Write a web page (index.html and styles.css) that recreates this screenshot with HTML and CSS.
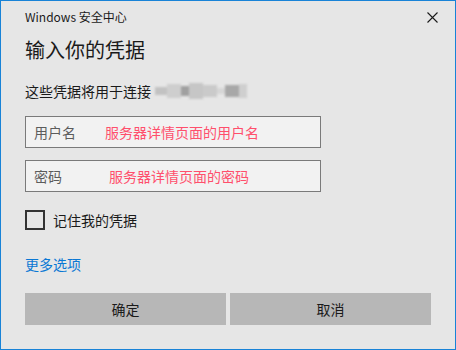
FILE: index.html
```html
<!DOCTYPE html>
<html lang="zh-CN">
<head>
<meta charset="utf-8">
<title>Windows 安全中心</title>
<link rel="stylesheet" href="styles.css">
</head>
<body>
<div class="window">
  <div class="titlebar">
    <span class="title">Windows 安全中心</span>
    <svg class="close" width="11" height="11" viewBox="0 0 11 11"><path d="M0.5 0.5 L10.5 10.5 M10.5 0.5 L0.5 10.5" stroke="#1a1a1a" stroke-width="1.1" fill="none"/></svg>
  </div>
  <div class="heading">输入你的凭据</div>
  <div class="desc">这些凭据将用于连接 <span class="blob"><i class="b1"></i><i class="b2"></i><i class="b3"></i><i class="b4"></i><i class="b5"></i><i class="b6"></i><i class="b7"></i><i class="b8"></i></span></div>
  <div class="field">
    <span class="ph">用户名</span><span class="note note-user">服务器详情页面的用户名</span>
  </div>
  <div class="field field-pass">
    <span class="ph">密码</span><span class="note note-pass">服务器详情页面的密码</span>
  </div>
  <label class="remember"><span class="box"></span><span>记住我的凭据</span></label>
  <div class="more">更多选项</div>
  <div class="buttons">
    <div class="btn">确定</div>
    <div class="btn">取消</div>
  </div>
</div>
</body>
</html>
```
FILE: styles.css
```css
* { box-sizing: border-box; }
html, body { margin: 0; padding: 0; }
body {
  font-family: "Noto Sans CJK SC", "Noto Sans", sans-serif;
  color: #000;
  background: #e6e6e6;
}
.window {
  width: 456px;
  height: 350px;
  border: 1px solid #1883d7;
  background: #e6e6e6;
  padding: 0 24px;
  display: flex;
  flex-direction: column;
}
.titlebar {
  height: 35px;
  display: flex;
  justify-content: space-between;
  align-items: flex-start;
  padding-top: 8px;
  margin-right: -24px;
  padding-right: 17px;
}
.title {
  font-size: 12px;
  line-height: 16px;
  color: #1a1a1a;
}
.close { margin-top: 3px; }
.heading {
  font-size: 20px;
  line-height: 28px;
  height: 28px;
  color: #1a1a1a;
}
.desc {
  margin-top: 17px;
  font-size: 14px;
  line-height: 20px;
  height: 20px;
  color: #1a1a1a;
  display: flex;
  align-items: center;
}
.blob {
  display: inline-flex;
  align-items: center;
  margin-left: 4px;
  height: 20px;
  filter: blur(1px);
}
.blob i { display: block; height: 8px; background: #c4c4c4; }
.blob .b1 { width: 12px; background: #c2c2c2; }
.blob .b2 { width: 14px; background: #cecece; height: 14px; }
.blob .b3 { width: 8px; background: #a0a0a0; height: 10px; }
.blob .b4 { width: 14px; background: #c6c6c6; height: 16px; }
.blob .b5 { width: 14px; background: #cacaca; height: 12px; }
.blob .b6 { width: 8px; background: #d6d6d6; height: 6px; }
.blob .b7 { width: 14px; background: #a8a8a8; height: 12px; }
.blob .b8 { width: 8px; background: #cfcfcf; height: 14px; }
.field {
  margin-top: 15px;
  width: 296px;
  height: 32px;
  border: 1px solid #7a7a7a;
  background: #f2f2f2;
  display: flex;
  align-items: center;
  padding-left: 8px;
  font-size: 14px;
}
.field-pass { margin-top: 12px; }
.ph { color: #5c5c5c; }
.note { color: #ff4f6c; }
.note-user { margin-left: 29px; }
.note-pass { margin-left: 47px; }
.remember {
  margin-top: 18px;
  display: flex;
  align-items: center;
  height: 20px;
  font-size: 14px;
  color: #1a1a1a;
}
.box {
  width: 20px;
  height: 20px;
  border: 2px solid #333;
  margin-right: 8px;
}
.more {
  margin-top: 24px;
  font-size: 14px;
  line-height: 20px;
  height: 20px;
  color: #0a78d4;
}
.buttons {
  margin-top: 19px;
  display: grid;
  grid-template-columns: 1fr 1fr;
  gap: 4px;
}
.btn {
  height: 32px;
  background: #b7b7b7;
  display: flex;
  align-items: center;
  justify-content: center;
  font-size: 14px;
  color: #1a1a1a;
}
```
